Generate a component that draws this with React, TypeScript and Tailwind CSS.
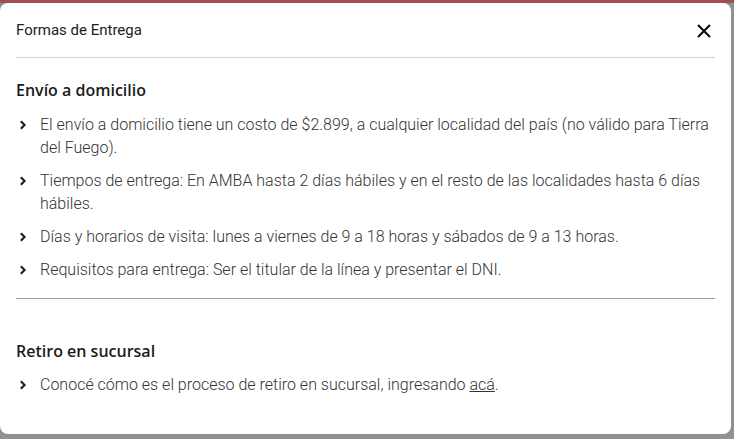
const items = [
  "El envío a domicilio tiene un costo de $2.899, a cualquier localidad del país (no válido para Tierra del Fuego).",
  "Tiempos de entrega: En AMBA hasta 2 días hábiles y en el resto de las localidades hasta 6 días hábiles.",
  "Días y horarios de visita: lunes a viernes de 9 a 18 horas y sábados de 9 a 13 horas.",
  "Requisitos para entrega: Ser el titular de la línea y presentar el DNI.",
];

function Chevron() {
  return (
    <svg width="8" height="10" viewBox="0 0 8 10" className="mt-[7px] shrink-0">
      <polyline points="1.8,1.2 5.6,5 1.8,8.8" fill="none" stroke="#1e1e1e" strokeWidth="2.1" />
    </svg>
  );
}

function Bullet({ children }: { children: React.ReactNode }) {
  return (
    <li className="flex gap-[13px] pl-[3px]">
      <Chevron />
      <span>{children}</span>
    </li>
  );
}

export default function App() {
  return (
    <div className="w-[734px] h-[439px] bg-[#8f9195] border-t-[3px] border-[#a24d53] overflow-hidden">
      <div className="w-[731px] h-[431px] bg-white rounded-lg font-['Roboto',sans-serif] px-4">
        <div className="flex items-center justify-between h-[55px] pt-[1px] border-b border-[#d2d2d2]">
          <h1 className="text-[15px] text-[#222]">Formas de Entrega</h1>
          <svg width="16" height="16" viewBox="0 0 16 16" className="mr-[3px]">
            <path d="M2 2 L14 14 M14 2 L2 14" stroke="#111" strokeWidth="2.2" />
          </svg>
        </div>

        <h2 className="mt-[20px] text-[16px] font-semibold text-[#1b1b1b] font-['Open_Sans',sans-serif] leading-6">
          Envío a domicilio
        </h2>
        <ul className="mt-[11px] flex flex-col gap-[10px] text-[16px] font-light text-[#333] leading-[23px]">
          {items.map((t) => (
            <Bullet key={t}>{t}</Bullet>
          ))}
        </ul>

        <div className="mt-[17px] border-t border-[#9a9a9a]" />

        <h2 className="mt-[40px] text-[16px] font-semibold text-[#1b1b1b] font-['Open_Sans',sans-serif] leading-6">
          Retiro en sucursal
        </h2>
        <ul className="mt-[10px] text-[16px] font-light text-[#333] leading-[23px]">
          <Bullet>
            Conocé cómo es el proceso de retiro en sucursal, ingresando <a className="underline">acá</a>.
          </Bullet>
        </ul>
      </div>
    </div>
  );
}
